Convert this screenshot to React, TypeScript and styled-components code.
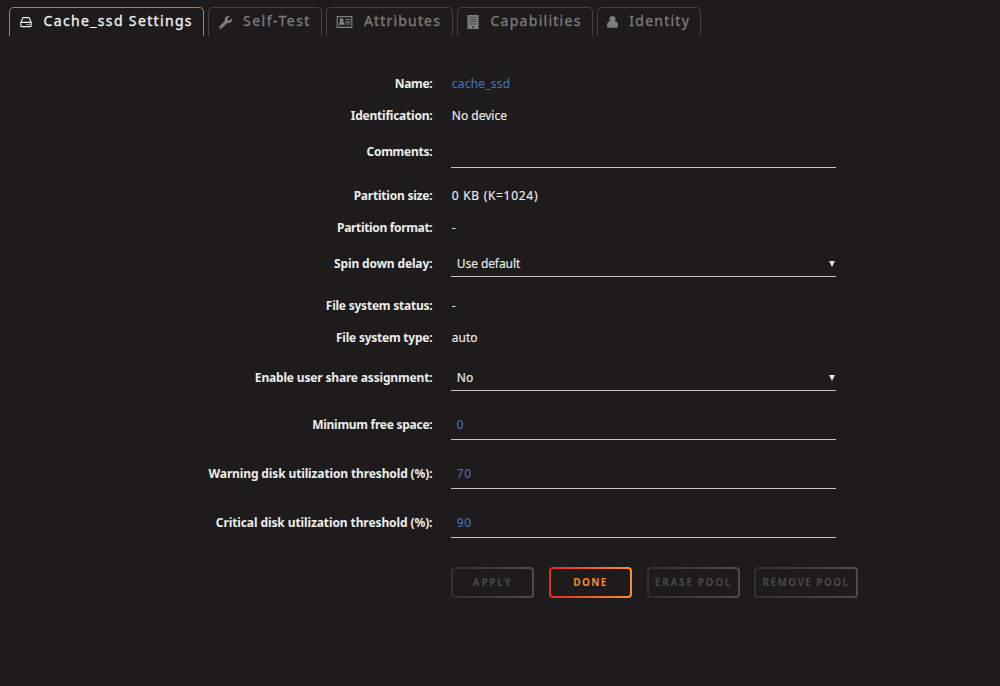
import React from "react";
import styled, { createGlobalStyle } from "styled-components";
import { FaWrench } from "react-icons/fa";

const Global = createGlobalStyle`
  body { margin: 0; background: #1d1b1c; color: #ececec; }
  #root { font: 13px/16px "Noto Sans", sans-serif; }
`;
const Page = styled.div`min-height: 686px; box-sizing: border-box; overflow: hidden;`;
const Tabs = styled.nav`display: flex; gap: 4px; padding: 7px 0 0 9px; height: 61px; box-sizing: border-box;`;
const Tab = styled.div<{ $w: number; $on?: boolean }>`
  width: ${(p) => p.$w}px; height: 29px; box-sizing: border-box;
  display: flex; align-items: center; padding: 0 0 0 10px;
  border: 1px solid ${(p) => (p.$on ? "#cf752b" : "#434242")}; border-bottom: 0;
  border-radius: 5px 5px 0 0; color: ${(p) => (p.$on ? "#f2f2f2" : "#7e7d7d")};
`;
const IconBox = styled.span<{ $w: number; $pull?: number }>`
  width: ${(p) => p.$w + (p.$pull || 0)}px; margin-left: ${(p) => -(p.$pull || 0)}px;
  height: 14px; flex: none; display: flex; align-items: center;
  svg { flex: none; fill: currentColor; }
`;
const TabText = styled.span<{ $s: number }>`
  font-size: 14px; line-height: 16px; margin-bottom: 2px; white-space: nowrap;
  letter-spacing: ${(p) => p.$s}px; -webkit-text-stroke: 0.3px currentColor;
`;
const Form = styled.div`padding-top: 7px;`;
const Row = styled.div<{ $h: number; $gap?: number }>`
  height: ${(p) => p.$h}px; margin-top: ${(p) => p.$gap || 0}px;
  display: grid; grid-template-columns: 433px 385px; column-gap: 18px; align-items: center;
`;
const Label = styled.label<{ $s: number }>`
  text-align: right; white-space: nowrap; font-weight: 700; font-size: 12px; padding-right: 0.6px;
  letter-spacing: ${(p) => p.$s}px;
`;
const Value = styled.span<{ $s?: number; $blue?: boolean }>`
  font-size: 12px; padding-left: 0.8px; letter-spacing: ${(p) => p.$s || 0}px;
  color: ${(p) => (p.$blue ? "#486dba" : "inherit")}; -webkit-text-stroke: 0.15px currentColor;
`;
const Field = styled.div<{ $half: number }>`
  height: ${(p) => p.$half * 2 + 1}px; box-sizing: border-box; border-bottom: 1px solid #c4c4c4; padding: 1px 0 0 5px;
  display: flex; align-items: center; justify-content: space-between;
`;
const Arrow = styled.svg`width: 6px; height: 6px; fill: #e2e2e2; margin-right: 1px;`;
const Actions = styled.div`display: flex; gap: 15px; padding: 20px 0 0 451px;`;
const Button = styled.button<{ $w: number; $s: number; $on?: boolean }>`
  width: ${(p) => p.$w}px; height: 31px; padding: 0 0 1px; box-sizing: border-box; border: 2px solid transparent; border-radius: 4px;
  background: linear-gradient(#1d1b1c, #1d1b1c) padding-box, linear-gradient(90deg, ${(p) => (p.$on ? "#e22828, #ff8c2f" : "#303030, #4c4b4b")}) border-box;
  color: ${(p) => (p.$on ? "#f8862d" : "#494848")};
  font: 700 10px "Noto Sans", sans-serif; letter-spacing: ${(p) => p.$s}px; text-transform: uppercase; white-space: nowrap;
  &:last-child { margin-left: -1px; }
`;

const DiskIcon = () => (
  <svg width="12" height="12" viewBox="0 0 12 12">
    <path d="M3 1.6h6L11.2 6.4v3.4a.8.8 0 0 1-.8.8H1.6a.8.8 0 0 1-.8-.8V6.4z M.8 6.4h10.4" fill="none" stroke="currentColor" strokeWidth="1.1" strokeLinejoin="round" />
    <path d="M6.6 8h1.2v1.1H6.6z M8.7 8h1.2v1.1H8.7z" />
  </svg>
);
const CardIcon = () => (
  <svg width="17" height="13" viewBox="0 0 17 13">
    <path d="M1.200.7h14.600v10.600H1.200z" fill="none" stroke="currentColor" strokeWidth="1.2" />
    <path d="M2.7 8.8c0-2 .6-2.6 1.5-2.8a2.1 2.2 0 1 1 2.8 0c1 .2 1.5.8 1.5 2.8z M9.3 3h5v1h-5z M9.3 5.2h5v1.2h-5z M9.3 7.6h5v1h-5z M3.3 10.7h2v1.1h-2z M11.7 10.7h2v1.1h-2z" />
  </svg>
);
const BuildingIcon = () => (
  <svg width="12" height="14" viewBox="0 0 12 14">
    <path fillRule="evenodd" d="M.4 0h11.2v14H.4z M2.4 2.1v.5h7.2v-.5z M2.4 4.3v.5h7.2v-.5z M2.4 6.5v.5h7.2v-.5z M2.4 8.7v.5h7.2v-.5z M5 11.4v1.4h2v-1.4z" />
  </svg>
);
const UserIcon = () => (
  <svg width="11" height="12" viewBox="0 0 11 12">
    <circle cx="5.5" cy="3.100" r="3" />
    <path d="M2.700 5.300C3.500 6.100 4.400 6.500 5.500 6.500S7.500 6.100 8.300 5.300C10.200 5.500 11 7.200 11 9.700 11 11 10.200 11.800 9.100 11.800H1.900C.8 11.800 0 11 0 9.700 0 7.200.8 5.500 2.700 5.300z" />
    <path d="M3.500 4.500h4v3h-4z" />
  </svg>
);

type Item = { label: string; ls: number; value?: string; vs?: number; h: number; gap?: number; half?: number; select?: boolean; blue?: boolean };
const items: Item[] = [
  { label: "Name:", ls: -0.3, value: "cache_ssd", vs: 0.2, h: 32, blue: true },
  { label: "Identification:", ls: -0.23, value: "No device", h: 32 },
  { label: "Comments:", ls: -0.25, h: 40, half: 15 },
  { label: "Partition size:", ls: -0.22, value: "0 KB (K=1024)", vs: 0.7, h: 32, gap: 8 },
  { label: "Partition format:", ls: -0.33, value: "-", h: 32 },
  { label: "Spin down delay:", ls: -0.13, value: "Use default", vs: -0.08, h: 39, half: 13, select: true },
  { label: "File system status:", ls: -0.23, value: "-", h: 32, gap: 7 },
  { label: "File system type:", ls: -0.23, value: "auto", h: 32 },
  { label: "Enable user share assignment:", ls: -0.17, value: "No", h: 47, half: 13, select: true },
  { label: "Minimum free space:", ls: -0.27, value: "0", h: 47, half: 15, blue: true },
  { label: "Warning disk utilization threshold (%):", ls: -0.13, value: "70", vs: 0.7, h: 49, gap: 1, half: 15, blue: true },
  { label: "Critical disk utilization threshold (%):", ls: -0.1, value: "90", vs: 0.7, h: 49, half: 15, blue: true },
];

export default function App() {
  return (
    <Page>
      <Global />
      <Tabs>
        <Tab $w={195} $on><IconBox $w={23.5}><DiskIcon /></IconBox><TabText $s={1.35}>Cache_ssd Settings</TabText></Tab>
        <Tab $w={114}><IconBox $w={24}><FaWrench size={13} /></IconBox><TabText $s={1.5}>Self-Test</TabText></Tab>
        <Tab $w={127}><IconBox $w={27} $pull={1}><CardIcon /></IconBox><TabText $s={1.17}>Attributes</TabText></Tab>
        <Tab $w={136}><IconBox $w={22.5} $pull={1}><BuildingIcon /></IconBox><TabText $s={1.27}>Capabilities</TabText></Tab>
        <Tab $w={104}><IconBox $w={21.3} $pull={1}><UserIcon /></IconBox><TabText $s={1.25}>Identity</TabText></Tab>
      </Tabs>
      <Form>
        {items.map((i) => (
          <Row key={i.label} $h={i.h} $gap={i.gap}>
            <Label $s={i.ls}>{i.label}</Label>
            {i.half ? (
              <Field $half={i.half}>
                <Value $s={i.vs} $blue={i.blue}>{i.value}</Value>
                {i.select && <Arrow viewBox="0 0 6 6"><path d="M0 0h6L3 6z" /></Arrow>}
              </Field>
            ) : <Value $s={i.vs} $blue={i.blue}>{i.value}</Value>}
          </Row>
        ))}
      </Form>
      <Actions>
        <Button $w={83} $s={1.7}>Apply</Button>
        <Button $w={83} $s={1.4} $on>Done</Button>
        <Button $w={93} $s={1.65}>Erase Pool</Button>
        <Button $w={104} $s={1.4}>Remove Pool</Button>
      </Actions>
    </Page>
  );
}
